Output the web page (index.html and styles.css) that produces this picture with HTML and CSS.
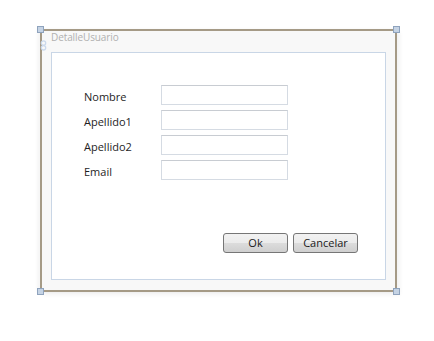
FILE: index.html
```html
<!DOCTYPE html>
<html>
<head>
<meta charset="utf-8">
<link rel="stylesheet" href="styles.css">
</head>
<body>
<div class="canvas">
  <div class="window">
    <span class="handle tl"></span>
    <span class="handle tr"></span>
    <span class="handle bl"></span>
    <span class="handle br"></span>
    <div class="title">DetalleUsuario</div>
    <svg class="pin" width="9" height="11" viewBox="0 0 9 11"><circle cx="4.5" cy="3" r="2.2" fill="none" stroke="#cbd9ec" stroke-width="1.3"/><circle cx="4.5" cy="7.8" r="2.2" fill="none" stroke="#cbd9ec" stroke-width="1.3"/></svg>
    <div class="panel">
      <div class="form">
        <label>Nombre</label><div class="box"></div>
        <label>Apellido1</label><div class="box"></div>
        <label>Apellido2</label><div class="box"></div>
        <label>Email</label><div class="box"></div>
      </div>
      <div class="buttons">
        <button class="btn">Ok</button>
        <button class="btn">Cancelar</button>
      </div>
    </div>
  </div>
</div>
</body>
</html>
```
FILE: styles.css
```css
html, body { margin: 0; padding: 0; background: #fff; }
body { font-family: "Open Sans", "Noto Sans", sans-serif; width: 434px; height: 341px; }
.canvas { padding: 29px 0 0 40px; }
.window {
  position: relative;
  width: 353px;
  height: 259px;
  border: 2px solid #a59a86;
  background: #f8f8f8;
  box-shadow: -3px 0 3px rgba(0,0,0,0.04), 3px 3px 4px rgba(0,0,0,0.05);
  box-sizing: content-box;
  padding: 0;
}
.handle {
  position: absolute;
  width: 5px; height: 5px;
  background: #c5d3e4;
  border: 1px solid #8fa3bd;
}
.handle.tl { left: -5px; top: -5px; }
.handle.tr { right: -5px; top: -5px; }
.handle.bl { left: -5px; bottom: -5px; }
.handle.br { right: -5px; bottom: -5px; }
.title {
  position: absolute;
  left: 9px; top: -1px;
  font-size: 10px;
  letter-spacing: -0.1px;
  color: #b0b0b0;
  line-height: 14px;
}
.pin { position: absolute; left: -3px; top: 9px; }
.panel {
  position: absolute;
  left: 9px; top: 21px;
  width: 335px; height: 228px;
  border: 1px solid #c9d6e6;
  background: #fff;
  box-sizing: border-box;
  padding: 32px 0 0 32px;
}
.form {
  display: grid;
  grid-template-columns: 77px 127px;
  grid-auto-rows: 20px;
  row-gap: 5px;
  align-items: center;
}
.form label {
  font-size: 11px;
  color: #1e1e1e;
  line-height: 14px;
  padding-top: 3px;
}
.box {
  height: 20px;
  border: 1px solid #d5dbe3;
  border-top-color: #c8ccd2;
  box-sizing: border-box;
  background: #fff;
}
.buttons {
  display: flex;
  gap: 5px;
  margin: 53px 0 0 139px;
}
.btn {
  width: 65px; height: 20px;
  font-family: inherit;
  font-size: 11px;
  color: #1a1a1a;
  border: 1px solid #767676;
  border-radius: 3px;
  background: linear-gradient(#f2f2f2 0%, #ebebeb 50%, #dcdcdc 51%, #cfcfcf 100%);
  padding: 0;
  line-height: 16px;
}
```
